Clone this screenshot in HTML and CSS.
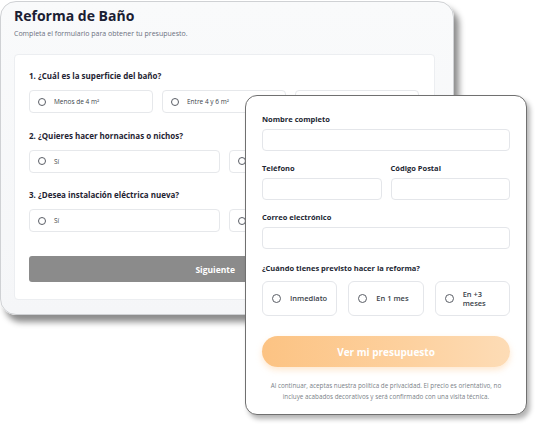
FILE: index.html
```html
<!DOCTYPE html>
<html lang="es">
<head>
<meta charset="utf-8">
<link rel="stylesheet" href="styles.css">
</head>
<body>
<div class="stage">
  <section class="back-card">
    <h1 class="title">Reforma de Baño</h1>
    <p class="subtitle">Completa el formulario para obtener tu presupuesto.</p>
    <div class="inner">
      <div class="question">
        <h2 class="q-title">1. ¿Cuál es la superficie del baño?</h2>
        <div class="opts three">
          <div class="opt"><span class="radio"></span>Menos de 4 m²</div>
          <div class="opt"><span class="radio"></span>Entre 4 y 6 m²</div>
          <div class="opt"><span class="radio"></span>Más de 6 m²</div>
        </div>
      </div>
      <div class="question">
        <h2 class="q-title">2. ¿Quieres hacer hornacinas o nichos?</h2>
        <div class="opts two">
          <div class="opt"><span class="radio"></span>Sí</div>
          <div class="opt"><span class="radio"></span>No</div>
        </div>
      </div>
      <div class="question">
        <h2 class="q-title">3. ¿Desea instalación eléctrica nueva?</h2>
        <div class="opts two">
          <div class="opt"><span class="radio"></span>Sí</div>
          <div class="opt"><span class="radio"></span>No</div>
        </div>
      </div>
      <button class="next-btn">Siguiente</button>
    </div>
  </section>

  <section class="front-card">
    <label class="lbl">Nombre completo</label>
    <div class="input"></div>
    <div class="row">
      <div class="field">
        <label class="lbl">Teléfono</label>
        <div class="input"></div>
      </div>
      <div class="field">
        <label class="lbl">Código Postal</label>
        <div class="input"></div>
      </div>
    </div>
    <label class="lbl">Correo electrónico</label>
    <div class="input last"></div>
    <label class="lbl">¿Cuándo tienes previsto hacer la reforma?</label>
    <div class="when">
      <div class="wopt"><span class="radio big"></span><span>Inmediato</span></div>
      <div class="wopt"><span class="radio big"></span><span>En 1 mes</span></div>
      <div class="wopt"><span class="radio big"></span><span class="narrow">En +3 meses</span></div>
    </div>
    <button class="cta">Ver mi presupuesto</button>
    <p class="legal">Al continuar, aceptas nuestra política de privacidad. El precio es orientativo, no<br>incluye acabados decorativos y será confirmado con una visita técnica.</p>
  </section>
</div>
</body>
</html>
```

FILE: styles.css
```css
* { box-sizing: border-box; margin: 0; padding: 0; }
html, body { background: #ffffff; }
body {
  font-family: "Open Sans", "Noto Sans", "Liberation Sans", sans-serif;
  color: #1d2233;
}
.stage {
  position: relative;
  width: 540px;
  height: 428px;
  padding-top: 1px;
}
.back-card {
  width: 454px;
  height: 314px;
  background: linear-gradient(180deg, #f9fafb 0%, #f5f6f8 100%);
  border: 1px solid #cfd1d4;
  border-radius: 16px;
  box-shadow: 5px 7px 6px rgba(0,0,0,0.45);
  padding: 4px 18px 0 13px;
  display: flex;
  flex-direction: column;
}
.title {
  font-size: 14px;
  font-weight: 700;
  line-height: 20px;
  color: #1b2033;
}
.subtitle {
  font-size: 7px;
  line-height: 11px;
  margin-top: 2px;
  color: #6b7080;
}
.inner {
  margin-top: 15px;
  background: #ffffff;
  border: 1px solid #eceef1;
  border-radius: 4px;
  height: 246px;
  padding: 15px 15px 0 14px;
}
.question { margin-bottom: 16.5px; }
.q-title {
  font-size: 8px;
  font-weight: 700;
  line-height: 12px;
  color: #1f2433;
  margin-bottom: 8px;
}
.opts { display: grid; gap: 9px; }
.opts.three { grid-template-columns: repeat(3, 1fr); }
.opts.two { grid-template-columns: repeat(2, 1fr); }
.opt {
  height: 23px;
  border: 1px solid #e6e8eb;
  border-radius: 4px;
  display: flex;
  align-items: center;
  padding-left: 8px;
  font-size: 6.5px;
  color: #3a3f4a;
  background: #fff;
}
.radio {
  width: 8px;
  height: 8px;
  border: 1px solid #5a5e66;
  border-radius: 50%;
  margin-right: 8px;
  flex: none;
}
.radio.big { width: 9px; height: 9px; margin-right: 9px; }
.next-btn {
  display: block;
  width: 100%;
  height: 26px;
  margin-top: 24px;
  border: none;
  border-radius: 3px;
  background: #8b8b8b;
  color: #ffffff;
  font-family: inherit;
  font-size: 8.5px;
  font-weight: 700;
  text-align: right;
  padding-right: 184px;
}
.front-card {
  position: absolute;
  left: 245px;
  top: 95px;
  width: 282px;
  height: 320px;
  background: #ffffff;
  border: 1px solid #707070;
  border-radius: 12px;
  box-shadow: 3px 4px 5px rgba(0,0,0,0.3);
  padding: 17px 16px 0 16px;
  display: flex;
  flex-direction: column;
}
.lbl {
  display: block;
  font-size: 7.5px;
  font-weight: 700;
  line-height: 12px;
  color: #222632;
  margin-bottom: 4px;
}
.input {
  height: 22px;
  border: 1px solid #e4e6ea;
  border-radius: 4px;
  margin-bottom: 11px;
}
.input.last { margin-bottom: 13px; }
.row { display: grid; grid-template-columns: 1fr 1fr; gap: 9px; }
.when {
  display: grid;
  grid-template-columns: repeat(3, 1fr);
  gap: 11px;
  margin-top: 3px;
}
.wopt {
  height: 35px;
  border: 1px solid #e4e6ea;
  border-radius: 6px;
  display: flex;
  align-items: center;
  padding-left: 9px;
  font-size: 7.5px;
  font-weight: 600;
  color: #3a3f4a;
  line-height: 9px;
}
.narrow { width: 26px; }
.cta {
  margin-top: 20px;
  height: 31px;
  border: none;
  border-radius: 16px;
  background: linear-gradient(90deg, #fcc383 0%, #fdd19f 60%, #fddcb6 100%);
  box-shadow: 0 3px 6px rgba(252, 190, 120, 0.35);
  color: #ffffff;
  font-family: inherit;
  font-size: 10px;
  font-weight: 700;
}
.legal {
  margin-top: 12.5px;
  font-size: 6.3px;
  line-height: 11px;
  color: #7b7f88;
  text-align: center;
}
```
